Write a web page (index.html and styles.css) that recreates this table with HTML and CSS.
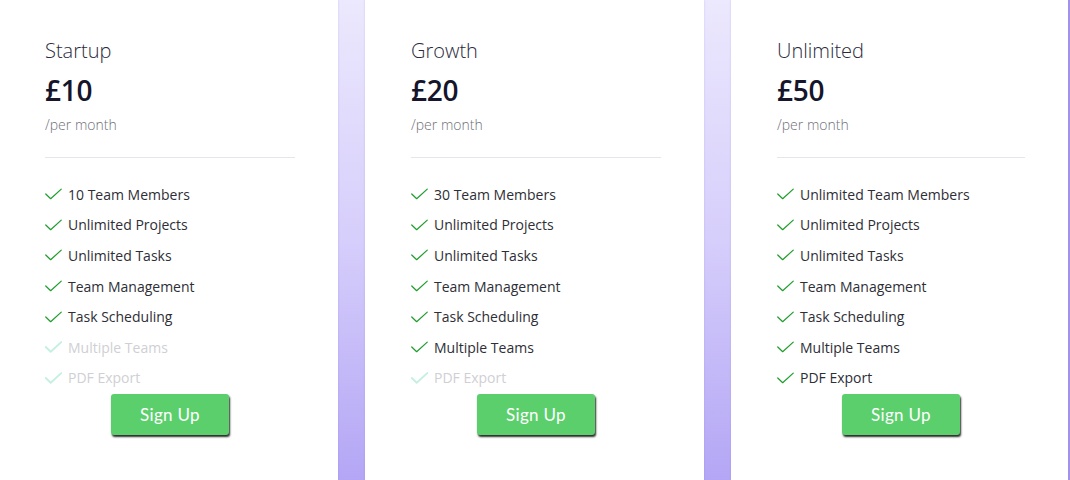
FILE: index.html
```html
<!DOCTYPE html>
<html lang="en">
<head>
<meta charset="utf-8">
<title>Pricing</title>
<link rel="stylesheet" href="styles.css">
</head>
<body>
<div class="pricing">
  <section class="card">
    <h2 class="title">Startup</h2>
    <div class="price">£10</div>
    <div class="period">/per month</div>
    <ul class="features">
      <li><svg class="check" viewBox="0 0 18 12"><path d="M0.8 6 L6 11 L17.2 0.8"/></svg>10 Team Members</li>
      <li><svg class="check" viewBox="0 0 18 12"><path d="M0.8 6 L6 11 L17.2 0.8"/></svg>Unlimited Projects</li>
      <li><svg class="check" viewBox="0 0 18 12"><path d="M0.8 6 L6 11 L17.2 0.8"/></svg>Unlimited Tasks</li>
      <li><svg class="check" viewBox="0 0 18 12"><path d="M0.8 6 L6 11 L17.2 0.8"/></svg>Team Management</li>
      <li><svg class="check" viewBox="0 0 18 12"><path d="M0.8 6 L6 11 L17.2 0.8"/></svg>Task Scheduling</li>
      <li class="off"><svg class="check" viewBox="0 0 18 12"><path d="M0.8 6 L6 11 L17.2 0.8"/></svg>Multiple Teams</li>
      <li class="off"><svg class="check" viewBox="0 0 18 12"><path d="M0.8 6 L6 11 L17.2 0.8"/></svg>PDF Export</li>
    </ul>
    <div class="action"><button class="signup">Sign Up</button></div>
  </section>
  <section class="card">
    <h2 class="title">Growth</h2>
    <div class="price">£20</div>
    <div class="period">/per month</div>
    <ul class="features">
      <li><svg class="check" viewBox="0 0 18 12"><path d="M0.8 6 L6 11 L17.2 0.8"/></svg>30 Team Members</li>
      <li><svg class="check" viewBox="0 0 18 12"><path d="M0.8 6 L6 11 L17.2 0.8"/></svg>Unlimited Projects</li>
      <li><svg class="check" viewBox="0 0 18 12"><path d="M0.8 6 L6 11 L17.2 0.8"/></svg>Unlimited Tasks</li>
      <li><svg class="check" viewBox="0 0 18 12"><path d="M0.8 6 L6 11 L17.2 0.8"/></svg>Team Management</li>
      <li><svg class="check" viewBox="0 0 18 12"><path d="M0.8 6 L6 11 L17.2 0.8"/></svg>Task Scheduling</li>
      <li><svg class="check" viewBox="0 0 18 12"><path d="M0.8 6 L6 11 L17.2 0.8"/></svg>Multiple Teams</li>
      <li class="off"><svg class="check" viewBox="0 0 18 12"><path d="M0.8 6 L6 11 L17.2 0.8"/></svg>PDF Export</li>
    </ul>
    <div class="action"><button class="signup">Sign Up</button></div>
  </section>
  <section class="card">
    <h2 class="title">Unlimited</h2>
    <div class="price">£50</div>
    <div class="period">/per month</div>
    <ul class="features">
      <li><svg class="check" viewBox="0 0 18 12"><path d="M0.8 6 L6 11 L17.2 0.8"/></svg>Unlimited Team Members</li>
      <li><svg class="check" viewBox="0 0 18 12"><path d="M0.8 6 L6 11 L17.2 0.8"/></svg>Unlimited Projects</li>
      <li><svg class="check" viewBox="0 0 18 12"><path d="M0.8 6 L6 11 L17.2 0.8"/></svg>Unlimited Tasks</li>
      <li><svg class="check" viewBox="0 0 18 12"><path d="M0.8 6 L6 11 L17.2 0.8"/></svg>Team Management</li>
      <li><svg class="check" viewBox="0 0 18 12"><path d="M0.8 6 L6 11 L17.2 0.8"/></svg>Task Scheduling</li>
      <li><svg class="check" viewBox="0 0 18 12"><path d="M0.8 6 L6 11 L17.2 0.8"/></svg>Multiple Teams</li>
      <li><svg class="check" viewBox="0 0 18 12"><path d="M0.8 6 L6 11 L17.2 0.8"/></svg>PDF Export</li>
    </ul>
    <div class="action"><button class="signup">Sign Up</button></div>
  </section>
</div>
</body>
</html>
```

FILE: styles.css
```css
* { box-sizing: border-box; }

html, body {
  margin: 0;
  padding: 0;
  background: #ffffff;
}

body {
  font-family: "Open Sans", "Noto Sans", sans-serif;
  color: #2f2f3a;
}

.pricing {
  display: grid;
  grid-template-columns: 338px 339px 337px;
  column-gap: 27px;
  width: 1070px;
  height: 480px;
  background: linear-gradient(180deg, #ece8fd 0%, #d6cefb 50%, #b4a6f5 100%);
  border-right: 2px solid #a292ea;
  overflow: hidden;
}

.card {
  background: #ffffff;
  padding: 38px 43px 0 46px;
  box-shadow: 0 0 2px rgba(120, 100, 220, 0.25);
}

.card:first-child {
  padding-left: 45px;
}

.title {
  margin: 0;
  font-size: 20px;
  line-height: 26px;
  font-weight: 300;
  color: #2a2a3c;
}

.price {
  margin-top: 6px;
  font-size: 28px;
  line-height: 40px;
  font-weight: 600;
  color: #15152b;
  letter-spacing: -0.3px;
}

.period {
  margin-top: 5px;
  font-size: 14px;
  line-height: 20px;
  font-weight: 300;
  color: #6f6f78;
  padding-bottom: 22px;
  border-bottom: 1px solid #e6e6ea;
}

.features {
  list-style: none;
  margin: 21px 0 0;
  padding: 0;
}

.features li {
  display: flex;
  align-items: center;
  gap: 6px;
  height: 30.6px;
  font-size: 14px;
  color: #2e2e36;
}

.check {
  width: 17px;
  height: 12px;
  flex: none;
  fill: none;
  stroke: #1f9e2c;
  stroke-width: 1.3;
  stroke-linecap: round;
  stroke-linejoin: round;
}

.features li.off {
  color: #cfcfd4;
}

.features li.off .check {
  stroke: #c6efe3;
  stroke-width: 2;
}

.action {
  display: flex;
  justify-content: center;
  margin-top: 1px;
}

.signup {
  width: 118px;
  height: 41px;
  border: none;
  border-radius: 3px;
  background: #5ccf6d;
  color: #ffffff;
  font-family: "Lato", "Open Sans", sans-serif;
  font-size: 17px;
  letter-spacing: 0.3px;
  box-shadow: 1px 2px 2px #2a2a2a;
  cursor: pointer;
}
```
